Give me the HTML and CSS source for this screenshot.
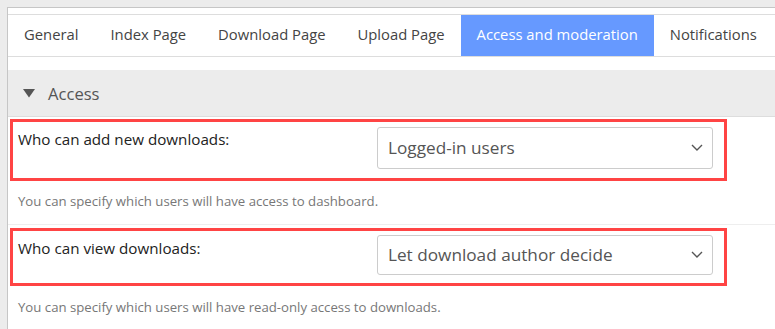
FILE: index.html
```html
<!DOCTYPE html>
<html>
<head>
<meta charset="utf-8">
<link rel="stylesheet" href="styles.css">
</head>
<body>
<div class="panel">
  <nav class="tabs">
    <span class="tab">General</span>
    <span class="tab">Index Page</span>
    <span class="tab">Download Page</span>
    <span class="tab">Upload Page</span>
    <span class="tab active">Access and moderation</span>
    <span class="tab">Notifications</span>
  </nav>
  <div class="section-head">
    <svg class="caret" width="12" height="9" viewBox="0 0 12 9"><polygon points="0,0 12,0 6,8.5" fill="#555"/></svg>
    <span>Access</span>
  </div>
  <div class="field field-first">
    <label class="label">Who can add new downloads:</label>
    <div class="select">
      <span>Logged-in users</span>
      <svg class="chev" width="12" height="7" viewBox="0 0 12 7"><polyline points="1,1 6,6 11,1" fill="none" stroke="#555" stroke-width="1.4"/></svg>
    </div>
  </div>
  <p class="help help-first">You can specify which users will have access to dashboard.</p>
  <div class="field field-second">
    <label class="label">Who can view downloads:</label>
    <div class="select">
      <span>Let download author decide</span>
      <svg class="chev" width="12" height="7" viewBox="0 0 12 7"><polyline points="1,1 6,6 11,1" fill="none" stroke="#555" stroke-width="1.4"/></svg>
    </div>
  </div>
  <p class="help help-second">You can specify which users will have read-only access to downloads.</p>
</div>
</body>
</html>
```
FILE: styles.css
```css
html, body {
  margin: 0;
  padding: 0;
  background: #ececec;
  font-family: "Open Sans", "Noto Sans", sans-serif;
  overflow: hidden;
}
.panel {
  margin: 7px 0 0 7px;
  border-top: 1px solid #c6c6c6;
  border-left: 1px solid #c6c6c6;
  background: #fff;
  padding-top: 6px;
  height: 330px;
}
.tabs {
  display: flex;
  border-top: 1px solid #ddd;
  border-bottom: 1px solid #ddd;
  height: 41px;
}
.tab {
  display: flex;
  align-items: center;
  padding: 0 16px 3px;
  font-size: 14.8px;
  color: #444;
  white-space: nowrap;
}
.tab.active {
  background: #6699ff;
  color: #fff;
}
.section-head {
  margin-top: 13px;
  height: 46px;
  background: #ececec;
  border-bottom: 1px solid #ddd;
  display: flex;
  align-items: center;
  padding-left: 15px;
  gap: 13px;
  font-size: 16.6px;
  color: #555;
}
.caret {
  margin-top: 1px;
}
.field {
  margin-left: 2px;
  width: 711px;
  border: 3px solid #ff4444;
  display: flex;
  align-items: flex-start;
}
.field-first {
  margin-top: 2px;
  height: 56px;
}
.field-second {
  height: 52px;
}
.label {
  flex: 0 0 auto;
  width: 359px;
  padding-left: 5px;
  font-size: 15.2px;
  color: #222;
}
.field-first .label { padding-top: 7px; }
.field-second .label { padding-top: 7px; }
.select {
  box-sizing: border-box;
  width: 336px;
  border: 1px solid #ccc;
  border-radius: 3px;
  display: flex;
  align-items: center;
  justify-content: space-between;
  padding: 0 9px 1px 10px;
  font-size: 17.2px;
  color: #555;
}
.field-first .select { margin-top: 5px; height: 42px; }
.field-second .select { margin-top: 4px; height: 40px; }
.help {
  margin: 0;
  padding-left: 10px;
  font-size: 13.2px;
  color: #777;
  display: flex;
  align-items: center;
}
.help-first {
  height: 39px;
  padding-bottom: 4px;
  border-bottom: 1px solid #eee;
  margin-bottom: 3px;
}
.help-second {
  height: 42px;
}
```
